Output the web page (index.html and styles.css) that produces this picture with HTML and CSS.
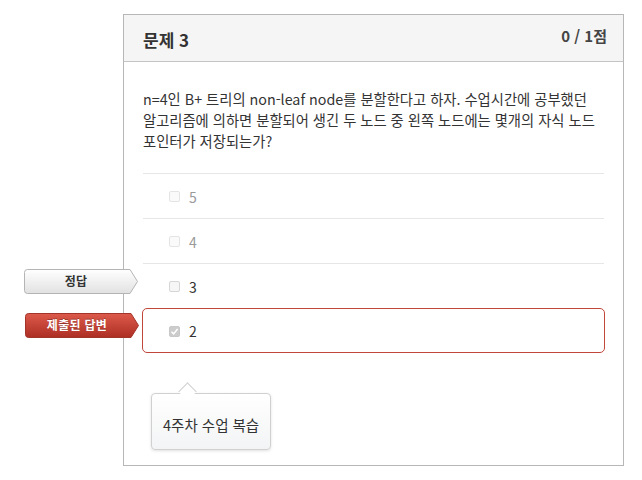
FILE: index.html
```html
<!DOCTYPE html>
<html lang="ko">
<head>
<meta charset="utf-8">
<title>문제 3</title>
<link rel="stylesheet" href="styles.css">
</head>
<body>
<div class="page">
  <section class="question-card">
    <header class="card-head">
      <h2 class="card-title">문제 3</h2>
      <span class="card-score">0 / 1점</span>
    </header>
    <div class="card-body">
      <p class="question-text">n=4인 B+ 트리의 non-leaf node를 분할한다고 하자. 수업시간에 공부했던 알고리즘에 의하면 분할되어 생긴 두 노드 중 왼쪽 노드에는 몇개의 자식 노드 포인터가 저장되는가?</p>
      <ul class="answers">
        <li class="answer muted"><span class="check"></span><span class="answer-text">5</span></li>
        <li class="answer muted"><span class="check"></span><span class="answer-text">4</span></li>
        <li class="answer">
          <span class="flag flag-correct">
            <svg class="flag-shape" width="115" height="25" viewBox="0 0 115 25">
              <defs>
                <linearGradient id="gGray" x1="0" y1="0" x2="0" y2="1">
                  <stop offset="0" stop-color="#ffffff"/>
                  <stop offset="1" stop-color="#e1e1e1"/>
                </linearGradient>
              </defs>
              <path d="M3.5 0.5 H106 L113.5 12.5 L106 24.5 H3.5 Q0.5 24.5 0.5 21.5 V3.5 Q0.5 0.5 3.5 0.5 Z" fill="url(#gGray)" stroke="#b4b4b4"/>
            </svg>
            <span class="flag-label">정답</span>
          </span>
          <span class="check"></span><span class="answer-text">3</span>
        </li>
        <li class="answer chosen">
          <span class="flag flag-chosen">
            <svg class="flag-shape" width="115" height="25" viewBox="0 0 115 25">
              <defs>
                <linearGradient id="gRed" x1="0" y1="0" x2="0" y2="1">
                  <stop offset="0" stop-color="#dc5a4b"/>
                  <stop offset="1" stop-color="#ad2e24"/>
                </linearGradient>
              </defs>
              <path d="M3.5 0.5 H106 L113.5 12.5 L106 24.5 H3.5 Q0.5 24.5 0.5 21.5 V3.5 Q0.5 0.5 3.5 0.5 Z" fill="url(#gRed)" stroke="#a3342a"/>
            </svg>
            <span class="flag-label">제출된 답변</span>
          </span>
          <span class="check checked">
            <svg width="9" height="9" viewBox="0 0 9 9"><path d="M1.5 4.8 L3.6 6.9 L7.6 2" fill="none" stroke="#ffffff" stroke-width="1.6"/></svg>
          </span><span class="answer-text">2</span>
        </li>
      </ul>
      <div class="feedback">4주차 수업 복습</div>
    </div>
  </section>
</div>
</body>
</html>
```
FILE: styles.css
```css
* { box-sizing: border-box; }

html, body {
  margin: 0;
  padding: 0;
  background: #ffffff;
}

body {
  font-family: "Noto Sans CJK KR", "Noto Sans", sans-serif;
  color: #333333;
}

.page {
  padding: 14px 0 0 123px;
}

.question-card {
  width: 501px;
  border: 1px solid #b7b7b7;
  background: #ffffff;
}

.card-head {
  display: flex;
  justify-content: space-between;
  align-items: flex-start;
  height: 47px;
  padding: 0 16px 0 19px;
  background: #f5f5f5;
  border-bottom: 1px solid #c4c4c4;
}

.card-title {
  margin: 12px 0 0;
  font-size: 17px;
  line-height: 26px;
  font-weight: 700;
  color: #333333;
}

.card-score {
  margin-top: 10px;
  font-size: 15px;
  line-height: 22px;
  font-weight: 700;
  color: #444444;
}

.card-body {
  padding: 26px 19px 15px 19px;
}

.question-text {
  margin: 0 0 22px;
  font-size: 14.3px;
  line-height: 21px;
  color: #333333;
  word-break: keep-all;
}

.answers {
  list-style: none;
  margin: 0;
  padding: 0;
}

.answer {
  position: relative;
  display: flex;
  align-items: center;
  height: 45px;
  padding: 1px 0 0 26px;
  border-top: 1px solid #e6e6e6;
  font-size: 14px;
  color: #333333;
}

.answer.muted {
  color: #9a9a9a;
}

.answer.chosen {
  margin: 0 -1px;
  padding-left: 26px;
  border: 1px solid #c0473a;
  border-radius: 5px;
}

.check {
  display: inline-flex;
  align-items: center;
  justify-content: center;
  width: 11px;
  height: 11px;
  margin-right: 9px;
  border: 1px solid #d6d6d6;
  border-radius: 2px;
  background: #f6f6f6;
}

.answer.muted .check {
  border-color: #e4e4e4;
  background: #fafafa;
}

.check.checked {
  border-color: #c8c8c8;
  background: #cccccc;
}

.check.checked svg {
  display: block;
}

.answer-text {
  line-height: 20px;
}

.flag {
  position: absolute;
  left: -119px;
  top: 5px;
  width: 115px;
  height: 25px;
}

.flag-chosen {
  left: -118px;
  top: 4px;
}

.flag-shape {
  position: absolute;
  left: 0;
  top: 0;
}

.flag-label {
  position: relative;
  display: block;
  width: 104px;
  text-align: center;
  font-size: 12px;
  line-height: 24px;
  font-weight: 700;
  letter-spacing: 0.3px;
}

.flag-correct .flag-label {
  color: #333333;
}

.flag-chosen .flag-label {
  color: #ffffff;
  text-shadow: 0 -1px 0 rgba(0, 0, 0, 0.25);
}

.feedback {
  position: relative;
  display: inline-block;
  margin: 40px 0 0 8px;
  padding: 20px 11px 14px;
  font-size: 14.5px;
  line-height: 21px;
  color: #333333;
  background: linear-gradient(#ffffff, #f3f4f5);
  border: 1px solid #d0d0d0;
  border-radius: 4px;
  box-shadow: 0 1px 3px rgba(0, 0, 0, 0.12);
}

.feedback::before {
  content: "";
  position: absolute;
  left: 29px;
  top: -9px;
  width: 12px;
  height: 12px;
  background: #ffffff;
  border-left: 1px solid #d0d0d0;
  border-top: 1px solid #d0d0d0;
  transform: rotate(45deg);
}
```
